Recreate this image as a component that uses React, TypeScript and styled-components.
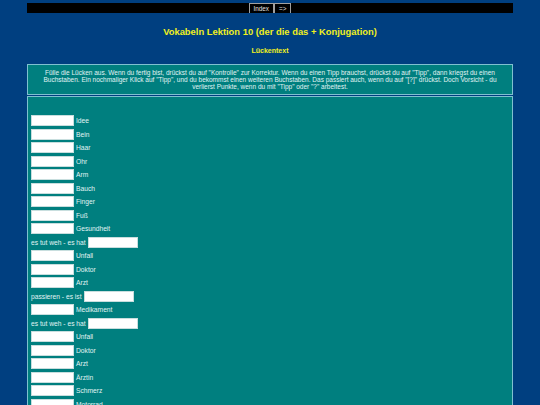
import React from 'react';
import styled, { createGlobalStyle } from 'styled-components';

const GlobalStyle = createGlobalStyle`
  html, body {
    margin: 0;
    padding: 0;
    background: #003f80;
    font-family: "Liberation Sans", Arial, sans-serif;
  }
`;

const Page = styled.div`
  width: 90%;
  margin: 0 auto;
  padding-top: 3px;
`;

const NavBar = styled.div`
  background: #000;
  height: 10px;
  display: flex;
  justify-content: center;
  align-items: stretch;
`;

const NavButton = styled.button`
  background: #000;
  color: #e0e0e0;
  border: 1px solid #a0a0a0;
  border-bottom: none;
  font-family: inherit;
  font-size: 6.3px;
  padding: 0 4px;
  margin: 0;
  line-height: 9px;
`;

const Title = styled.h2`
  color: #f0f020;
  font-size: 9.4px;
  font-weight: bold;
  text-align: center;
  margin: 13px 0 0;
  line-height: 11px;
`;

const SubTitle = styled.h3`
  color: #f0f020;
  font-size: 7px;
  font-weight: bold;
  text-align: center;
  margin: 9px 0 0;
  line-height: 9px;
`;

const Box = styled.div`
  background: #007f7f;
  border: 1px solid #7fc0d0;
  color: #e0f4f4;
`;

const Instructions = styled(Box)`
  margin-top: 9px;
  padding: 4px 6px 4px;
  font-size: 6.5px;
  line-height: 7px;
  text-align: center;
`;

const Exercise = styled(Box)`
  margin-top: 1px;
  padding: 17px 3px 0;
  min-height: 320px;
`;

const Row = styled.div`
  display: flex;
  align-items: center;
  gap: 2px;
  height: 13.5px;
  font-size: 6.7px;
`;

const Gap = styled.input<{ $w: number }>`
  width: ${({ $w }) => $w}px;
  height: 11px;
  box-sizing: border-box;
  border: 1px solid #c8dede;
  background: #fff;
  padding: 0;
  margin: 0;
`;

type Item = { before?: string; after?: string; w: number };

const ITEMS: Item[] = [
  { after: 'Idee', w: 43 },
  { after: 'Bein', w: 43 },
  { after: 'Haar', w: 43 },
  { after: 'Ohr', w: 43 },
  { after: 'Arm', w: 43 },
  { after: 'Bauch', w: 43 },
  { after: 'Finger', w: 43 },
  { after: 'Fuß', w: 43 },
  { after: 'Gesundheit', w: 43 },
  { before: 'es tut weh - es hat', w: 50 },
  { after: 'Unfall', w: 43 },
  { after: 'Doktor', w: 43 },
  { after: 'Arzt', w: 43 },
  { before: 'passieren - es ist', w: 50 },
  { after: 'Medikament', w: 43 },
  { before: 'es tut weh - es hat', w: 50 },
  { after: 'Unfall', w: 43 },
  { after: 'Doktor', w: 43 },
  { after: 'Arzt', w: 43 },
  { after: 'Ärztin', w: 43 },
  { after: 'Schmerz', w: 43 },
  { after: 'Motorrad', w: 43 },
];

export default function App() {
  return (
    <>
      <GlobalStyle />
      <Page>
        <NavBar>
          <NavButton>Index</NavButton>
          <NavButton>=&gt;</NavButton>
        </NavBar>
        <Title>Vokabeln Lektion 10 (der die das + Konjugation)</Title>
        <SubTitle>Lückentext</SubTitle>
        <Instructions>
          Fülle die Lücken aus. Wenn du fertig bist, drückst du auf "Kontrolle" zur Korrektur. Wenn du einen Tipp
          brauchst, drückst du auf "Tipp", dann kriegst du einen Buchstaben. Ein nochmaliger Klick auf "Tipp", und du
          bekommst einen weiteren Buchstaben. Das passiert auch, wenn du auf "[?]" drückst. Doch Vorsicht - du verlierst
          Punkte, wenn du mit "Tipp" oder "?" arbeitest.
        </Instructions>
        <Exercise>
          {ITEMS.map((item, i) => (
            <Row key={i}>
              {item.before && <span>{item.before}</span>}
              <Gap $w={item.w} type="text" />
              {item.after && <span>{item.after}</span>}
            </Row>
          ))}
        </Exercise>
      </Page>
    </>
  );
}
